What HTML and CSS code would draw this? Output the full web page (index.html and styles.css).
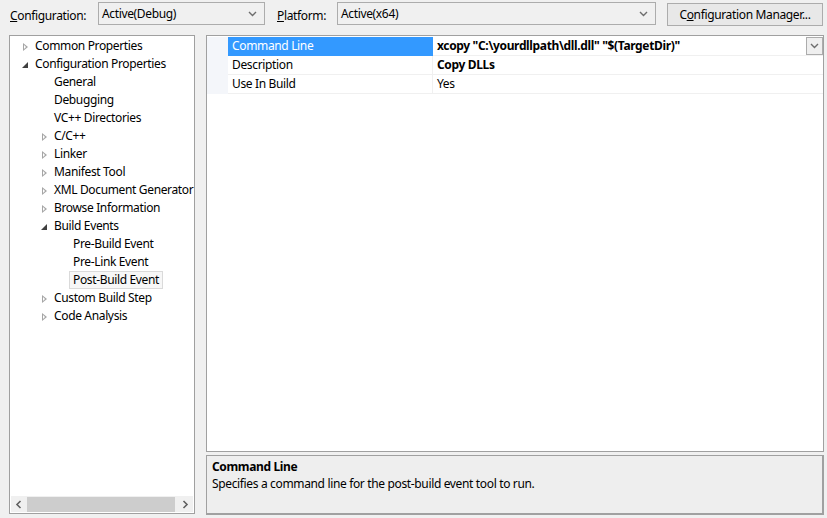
FILE: index.html
```html
<!DOCTYPE html>
<html lang="en">
<head>
    <meta charset="UTF-8">
    <title>Post-Build Event Property Pages</title>
    <link rel="stylesheet" href="styles.css">
</head>
<body>
    <div class="toolbar">
        <span class="label"><u>C</u>onfiguration:</span>
        <div class="combo combo-config">
            <span>Active(Debug)</span>
            <svg class="chev" width="9" height="6" viewBox="0 0 9 6"><path d="M1 1 L4.5 4.5 L8 1" fill="none" stroke="#6d6d6d" stroke-width="1.4"/></svg>
        </div>
        <span class="label label-platform"><u>P</u>latform:</span>
        <div class="combo combo-platform">
            <span>Active(x64)</span>
            <svg class="chev" width="9" height="6" viewBox="0 0 9 6"><path d="M1 1 L4.5 4.5 L8 1" fill="none" stroke="#6d6d6d" stroke-width="1.4"/></svg>
        </div>
        <button class="btn">C<u>o</u>nfiguration Manager...</button>
    </div>

    <div class="main">
        <div class="tree">
            <ul class="tree-list">
                <li class="lvl0"><span class="arrow closed"></span>Common Properties</li>
                <li class="lvl0"><span class="arrow open"></span>Configuration Properties</li>
                <li class="lvl1"><span class="arrow"></span>General</li>
                <li class="lvl1"><span class="arrow"></span>Debugging</li>
                <li class="lvl1"><span class="arrow"></span>VC++ Directories</li>
                <li class="lvl1"><span class="arrow closed"></span>C/C++</li>
                <li class="lvl1"><span class="arrow closed"></span>Linker</li>
                <li class="lvl1"><span class="arrow closed"></span>Manifest Tool</li>
                <li class="lvl1"><span class="arrow closed"></span>XML Document Generator</li>
                <li class="lvl1"><span class="arrow closed"></span>Browse Information</li>
                <li class="lvl1"><span class="arrow open"></span>Build Events</li>
                <li class="lvl2"><span class="arrow"></span>Pre-Build Event</li>
                <li class="lvl2"><span class="arrow"></span>Pre-Link Event</li>
                <li class="lvl2"><span class="arrow"></span><span class="current">Post-Build Event</span></li>
                <li class="lvl1"><span class="arrow closed"></span>Custom Build Step</li>
                <li class="lvl1"><span class="arrow closed"></span>Code Analysis</li>
            </ul>
            <div class="hscroll">
                <svg class="sarrow" width="16" height="15" viewBox="0 0 16 15"><path d="M9.5 4 L6 7.5 L9.5 11" fill="none" stroke="#606060" stroke-width="1.6"/></svg>
                <div class="thumb"></div>
                <svg class="sarrow" width="16" height="15" viewBox="0 0 16 15"><path d="M6.5 4 L10 7.5 L6.5 11" fill="none" stroke="#606060" stroke-width="1.6"/></svg>
            </div>
        </div>

        <div class="right">
            <div class="grid">
                <div class="row selected">
                    <div class="gutter"></div>
                    <div class="name">Command Line</div>
                    <div class="value bold">xcopy "C:\yourdllpath\dll.dll" "$(TargetDir)"
                        <span class="drop"><svg width="9" height="6" viewBox="0 0 9 6"><path d="M1 1 L4.5 4.5 L8 1" fill="none" stroke="#6d6d6d" stroke-width="1.4"/></svg></span>
                    </div>
                </div>
                <div class="row">
                    <div class="gutter"></div>
                    <div class="name">Description</div>
                    <div class="value bold">Copy DLLs</div>
                </div>
                <div class="row">
                    <div class="gutter"></div>
                    <div class="name">Use In Build</div>
                    <div class="value">Yes</div>
                </div>
            </div>
            <div class="desc">
                <div class="desc-title">Command Line</div>
                <div class="desc-text">Specifies a command line for the post-build event tool to run.</div>
            </div>
        </div>
    </div>
</body>
</html>
```

FILE: styles.css
```css
body {
    margin: 0;
    width: 827px;
    height: 518px;
    background: #f0f0f0;
    font-family: 'Segoe UI', 'Noto Sans', 'Open Sans', sans-serif;
    font-size: 12px;
    letter-spacing: -0.35px;
    color: #000;
    overflow: hidden;
}
.toolbar {
    display: flex;
    align-items: center;
    height: 29px;
    padding-left: 10px;
}
.label {
    width: 88px;
    margin-top: 1px;
}
.label-platform {
    width: 48px;
    margin-left: 12px;
    margin-right: 12px;
}
.combo {
    margin-top: -2px;
    border: 1px solid #acacac;
    background: #f0f0f0;
    display: flex;
    align-items: center;
    justify-content: space-between;
    padding: 0 7px 0 3px;
    box-sizing: border-box;
    height: 23px;
}
.combo-config {
    width: 167px;
}
.combo-platform {
    width: 319px;
}
.btn {
    margin-left: 11px;
    margin-top: -1px;
    width: 156px;
    height: 23px;
    border: 1px solid #acacac;
    background: #e8e8e8;
    font: inherit;
    letter-spacing: inherit;
    color: #000;
    padding: 0;
}
.main {
    display: flex;
    padding: 6px 0 0 9px;
    gap: 11px;
}
.tree {
    width: 186px;
    height: 479px;
    box-sizing: border-box;
    border: 1px solid #a0a0a0;
    background: #fff;
    position: relative;
}
.tree-list {
    list-style: none;
    margin: 0;
    padding: 1px 0 0 0;
}
.tree-list li {
    height: 18px;
    line-height: 18px;
    display: flex;
    align-items: center;
    white-space: nowrap;
}
.lvl0 { padding-left: 10px; }
.lvl1 { padding-left: 29px; }
.lvl2 { padding-left: 48px; }
.arrow {
    width: 15px;
    height: 18px;
    flex: none;
    position: relative;
}
.arrow.closed::before {
    content: '';
    position: absolute;
    left: 3px;
    top: 6px;
    border-left: 5px solid #a6a6a6;
    border-top: 4px solid transparent;
    border-bottom: 4px solid transparent;
}
.arrow.closed::after {
    content: '';
    position: absolute;
    left: 4px;
    top: 8px;
    border-left: 2px solid #fff;
    border-top: 2px solid transparent;
    border-bottom: 2px solid transparent;
}
.arrow.open::before {
    content: '';
    position: absolute;
    left: 2px;
    top: 7px;
    border-right: 6px solid #404040;
    border-top: 6px solid transparent;
}
.current {
    margin-left: -4px;
    padding: 0 3px;
    border: 1px solid #dadada;
    background: #f7f7f7;
    line-height: 16px;
}
.hscroll {
    position: absolute;
    left: 1px;
    right: 1px;
    bottom: 1px;
    height: 16px;
    background: #f0f0f0;
    display: flex;
    align-items: center;
}
.sarrow {
    flex: none;
}
.thumb {
    flex: 1;
    height: 15px;
    background: #cdcdcd;
    margin-right: 2px;
}
.right {
    width: 618px;
    display: flex;
    flex-direction: column;
    gap: 3px;
}
.grid {
    height: 417px;
    box-sizing: border-box;
    border: 1px solid #a0a0a0;
    background: #fff;
    padding-top: 1px;
}
.row {
    display: flex;
    height: 19px;
    line-height: 18px;
}
.gutter {
    width: 21px;
    background: #f4f6fa;
    flex: none;
}
.name {
    width: 205px;
    padding-left: 4px;
    box-sizing: border-box;
    border-bottom: 1px solid #f0f0f0;
    border-right: 1px solid #f0f0f0;
}
.value {
    flex: 1;
    padding-left: 4px;
    border-bottom: 1px solid #f0f0f0;
    position: relative;
}
.bold {
    font-weight: bold;
}
.selected .name {
    background: #3399ff;
    color: #fff;
    border-color: #3399ff;
}
.drop {
    position: absolute;
    right: 0;
    top: 0;
    width: 15px;
    height: 16px;
    border: 1px solid #acacac;
    background: #efefef;
    display: flex;
    align-items: center;
    justify-content: center;
}
.desc {
    height: 60px;
    box-sizing: border-box;
    border: 1px solid #a0a0a0;
    border-right-width: 2px;
    border-bottom-width: 2px;
    background: #eeeeee;
    padding: 2px 5px;
}
.desc-title {
    font-weight: bold;
    line-height: 17px;
}
.desc-text {
    line-height: 18px;
}
```
